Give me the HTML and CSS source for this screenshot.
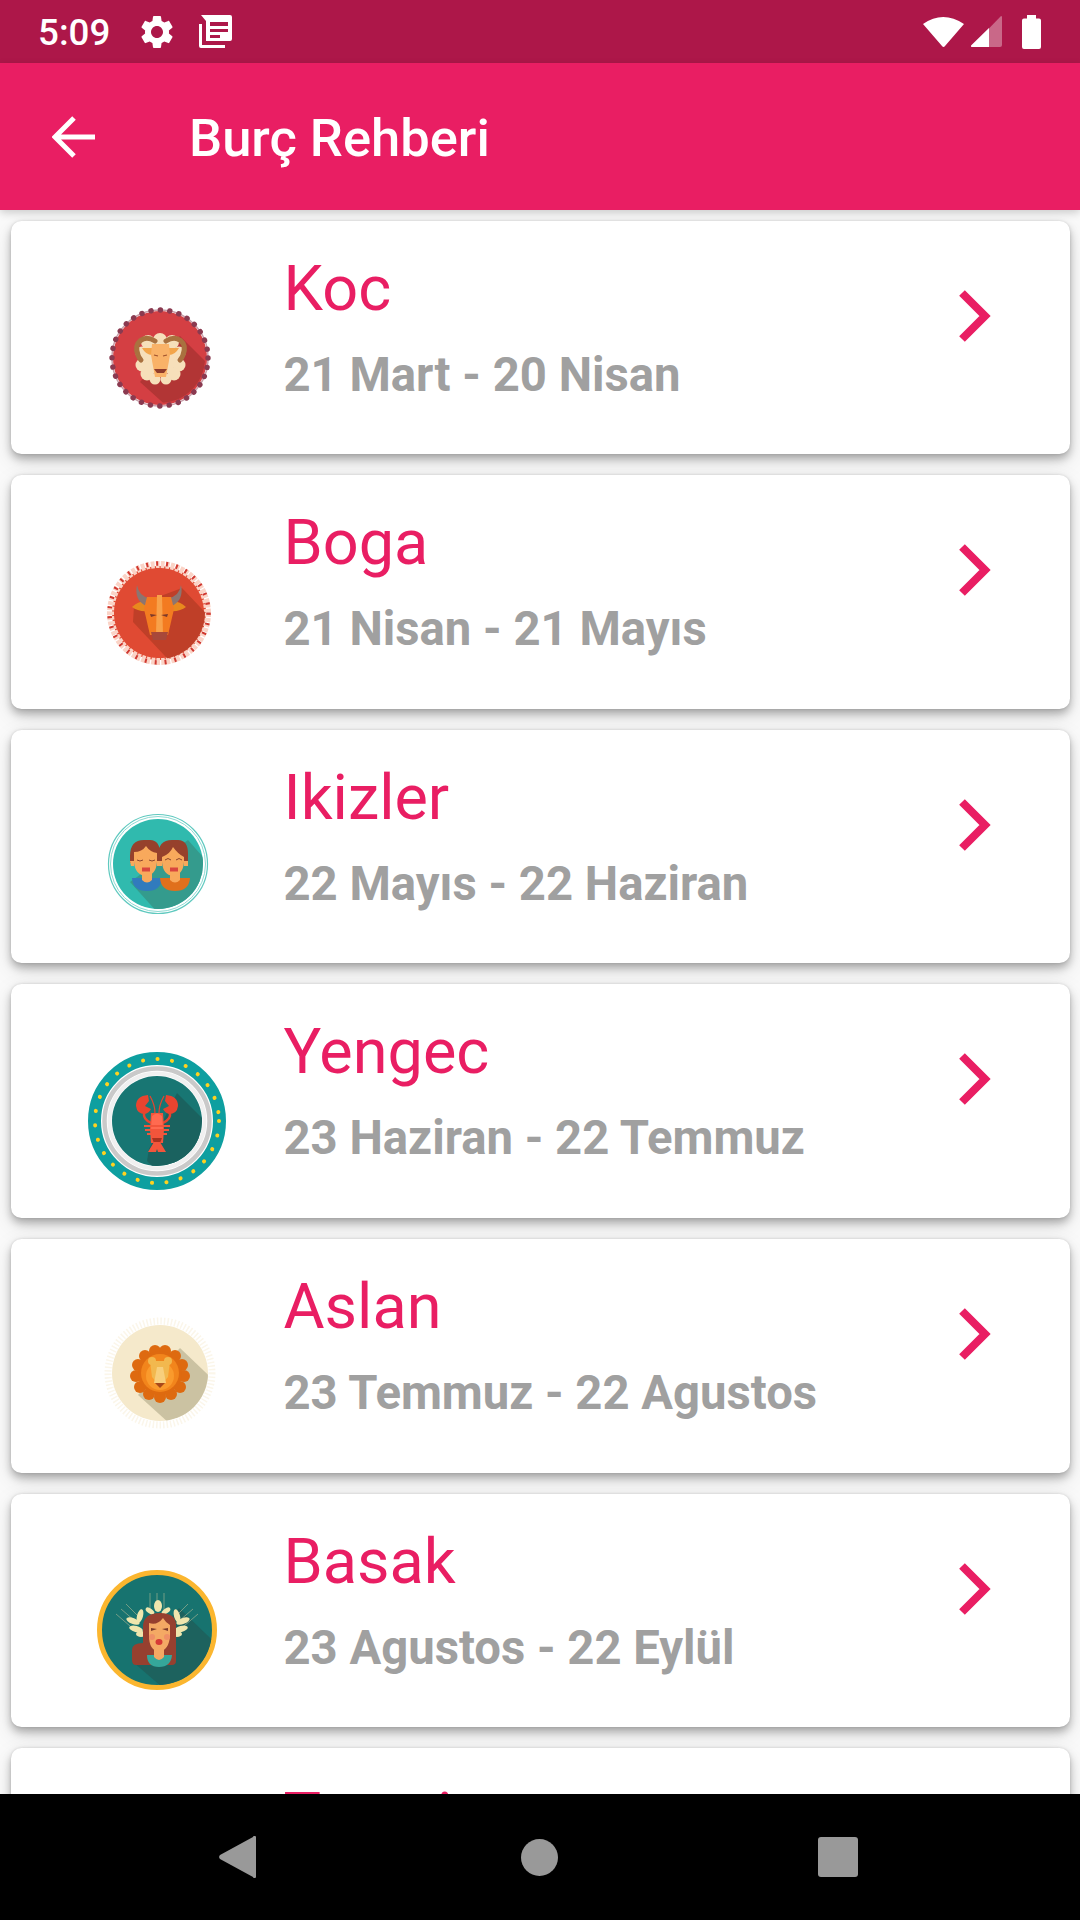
FILE: index.html
```html
<!DOCTYPE html>
<html lang="tr">
<head>
<meta charset="utf-8">
<title>Burç Rehberi</title>
<link rel="stylesheet" href="styles.css">
</head>
<body>
<div class="phone">
  <header class="status">
    <span class="clock">5:09</span>
    <svg class="st-gear" viewBox="2.4 1.8 19.2 20.4"><path fill="#fff" d="M19.14 12.94c.04-.3.06-.61.06-.94 0-.32-.02-.64-.07-.94l2.03-1.58c.18-.14.23-.41.12-.61l-1.92-3.32c-.12-.22-.37-.29-.59-.22l-2.39.96c-.5-.38-1.03-.7-1.62-.94l-.36-2.54c-.04-.24-.24-.41-.48-.41h-3.84c-.24 0-.43.17-.47.41l-.36 2.54c-.59.24-1.13.57-1.62.94l-2.39-.96c-.22-.08-.47 0-.59.22L2.74 8.87c-.12.21-.08.47.12.61l2.03 1.58c-.05.3-.09.63-.09.94s.02.64.07.94l-2.03 1.58c-.18.14-.23.41-.12.61l1.92 3.32c.12.22.37.29.59.22l2.39-.96c.5.38 1.03.7 1.62.94l.36 2.54c.05.24.24.41.48.41h3.84c.24 0 .44-.17.47-.41l.36-2.54c.59-.24 1.13-.56 1.62-.94l2.39.96c.22.08.47 0 .59-.22l1.92-3.32c.12-.22.07-.47-.12-.61l-2.01-1.58zM12 15.6c-1.98 0-3.6-1.62-3.6-3.6s1.62-3.6 3.6-3.6 3.6 1.62 3.6 3.6-1.62 3.6-3.6 3.6z"/></svg>
    <svg class="st-news" viewBox="0 0 33 33"><path fill="#fff" fill-rule="evenodd" d="M2 0H31a2 2 0 0 1 2 2V24a2 2 0 0 1-2 2H7V6ZM11 7V11H29V7ZM11 14V17H29V14H11ZM11 20V23H21V20Z"/><path fill="#fff" d="M0 9H3V30H26V33H2a2 2 0 0 1-2-2Z"/></svg>
    <span class="st-space"></span>
    <svg class="st-wifi" viewBox="0 0 41 31"><path fill="#fff" d="M0 8Q20-6 41 8L22 30Q20.500 32 19 30Z"/></svg>
    <svg class="st-signal" viewBox="0 0 31 31"><path fill="#fff" fill-opacity=".35" d="M30 0a1 1 0 0 1 1 1V29a2 2 0 0 1-2 2H0Z"/><path fill="#fff" d="M18 12V31H1a1 1 0 0 1-.7-1.700Z"/></svg>
    <svg class="st-batt" viewBox="0 0 19 34"><path fill="#fff" d="M5 0H14V3.500H17a2 2 0 0 1 2 2V32a2 2 0 0 1-2 2H2a2 2 0 0 1-2-2V5.500a2 2 0 0 1 2-2H5Z"/></svg>
  </header>
  <div class="appbar">
    <svg class="back" viewBox="0 0 43 42"><path fill="none" stroke="#fff" stroke-width="5" d="M43 21H4M22 2 3 21 22 40"/></svg>
    <h1 class="appbar-title">Burç Rehberi</h1>
  </div>
  <main class="list">
    <article class="card">
      <svg class="sign" viewBox="-80 -80 160 160"><defs><clipPath id="c1"><circle r="45"/></clipPath></defs>
        <circle r="47" fill="#d43f43"/>
        <circle r="48" fill="none" stroke="#c9a0ab" stroke-width="1.500"/>
        <circle r="48" fill="none" stroke="#8a3a50" stroke-width="5.400" stroke-linecap="round" stroke-dasharray="0.100 9.325"/>
        <polygon clip-path="url(#c1)" points="20,-22 62,20 20,60 -20,24" fill="#b23535"/>
        <g fill="#f6dfba"><circle cx="-12" cy="-16" r="7"/><circle cx="0" cy="-18" r="7"/><circle cx="12" cy="-16" r="7"/><circle cx="-18" cy="-5" r="6.500"/><circle cx="19" cy="-5" r="6.500"/><circle cx="-18" cy="7" r="6.500"/><circle cx="19" cy="7" r="6.500"/><circle cx="-13" cy="16" r="6.500"/><circle cx="14" cy="16" r="6.500"/><circle cx="-5" cy="21" r="5.500"/><circle cx="6" cy="21" r="5.500"/><circle r="17"/></g>
        <path fill="none" stroke="#a9713f" stroke-width="5" stroke-linecap="round" d="M-5-17C-16-24-27-16-22-3-21 0-20 1-19 2M6-17C17-24 28-16 23-3 22 0 21 1 20 2"/>
        <path fill="#f3a54a" d="M-18-10H-4L-8-3Q-14-3-18-10ZM19-10H5L9-3Q15-3 19-10Z"/>
        <path fill="#f9b268" d="M-8-14H9L10-3 6 19H-5L-9-3Z"/>
        <path fill="#8e3b2b" d="M-6 11H7L4 15H-3Z"/>
        <path stroke="#a0522d" stroke-width="1.200" d="M-6-3-2-2M7-3 3-2"/>
      </svg>
      <div class="text"><h2 class="name">Koc</h2><p class="dates">21 Mart - 20 Nisan</p></div>
      <svg class="chev" viewBox="0 0 32 52"><path d="M3 3 26 26 3 49" fill="none" stroke="#e91e63" stroke-width="8"/></svg>
    </article>
    <article class="card">
      <svg class="sign" viewBox="-80 -80 160 160"><defs><clipPath id="c2"><circle cx="-1" cy="1" r="46"/></clipPath></defs>
        <circle cx="-1" cy="1" r="47" fill="#e04a33"/>
        <circle cx="-1" cy="1" r="48.500" fill="none" stroke="#fbd3c6" stroke-width="7" stroke-dasharray="3.800 1.200"/>
        <circle cx="-1" cy="1" r="49.500" fill="none" stroke="#d0382f" stroke-width="4.500" stroke-dasharray="2 8"/>
        <polygon clip-path="url(#c2)" points="22,-24 62,18 20,60 -27,10 -26,-6" fill="#bf3f28"/>
        <path fill="#e8891e" d="M-28-5Q-20-12-12-10L-11-1Q-22 0-28-5ZM26-5Q18-12 10-10L9-1Q20 0 26-5Z"/>
        <path fill="#8c7570" d="M-23-27Q-21-15-10-14L-14-6Q-26-12-23-27ZM21-27Q19-15 8-14L12-6Q24-12 21-27Z"/>
        <path fill="#f37b21" d="M-13-15H11L14-3 8 23H-10L-16-3Z"/>
        <path fill="#f8a14a" d="M-3-17H2L3 23H-4Z"/>
        <path fill="#a8483a" d="M-9 20H8L6 28H-7Z"/>
        <path fill="#7c3a2a" d="M-10 2-3 3-9 5ZM8 2 1 3 7 5Z"/>
      </svg>
      <div class="text"><h2 class="name">Boga</h2><p class="dates">21 Nisan - 21 Mayıs</p></div>
      <svg class="chev" viewBox="0 0 32 52"><path d="M3 3 26 26 3 49" fill="none" stroke="#e91e63" stroke-width="8"/></svg>
    </article>
    <article class="card">
      <svg class="sign" viewBox="-80 -80 160 160"><defs><clipPath id="c3"><circle r="45"/></clipPath></defs>
        <g transform="translate(-2 -3)">
        <circle r="49.500" fill="#fff" stroke="#5fc9bf" stroke-width="1.200"/>
        <circle r="47.500" fill="none" stroke="#8ddad2" stroke-width="1"/>
        <circle r="45" fill="#30baae"/>
        <polygon clip-path="url(#c3)" points="30,-24 60,10 10,60 -28,18" fill="#349b8d"/>
        <path fill="#317bbd" d="M-26 14H4Q3 27-11 27T-26 14Z"/>
        <path fill="#e0701c" d="M2 14H32Q31 27 17 27T2 14Z"/>
        <path fill="#f8a95c" d="M-16 8H-6V16Q-11 21-16 16ZM12 8H22V16Q17 21 12 16Z"/>
        <path fill="#96412c" d="M-28-8Q-28-24-14-24H-8Q2-24 2-10V-1H-28ZM0-8Q0-24 14-24H20Q30-24 30-10V-1H0Z"/>
        <path fill="#f8a95c" d="M-24-12Q-16-12-12-18-8-12-1-11V-2Q-2 11-12 12-23 11-24-2ZM4-7Q12-10 15-17 20-10 26-7V-2Q25 11 15 12 5 11 4-2Z"/>
        <path fill="#f8a95c" d="M-28-3H-24V2H-27ZM-1-3H4V2H-1ZM26-3H30V2H26Z"/>
        <path fill="none" stroke="#7d3a2a" stroke-width=".9" d="M-21-4Q-18-2-15-4M-9-4Q-6-2-3-4M7-4Q10-7 13-4M18-4Q21-7 24-4"/>
        <path fill="#d9463e" d="M-16 3.500H-8V7.500H-16ZM12 3.500H20V7.500H12Z"/>
        </g>
      </svg>
      <div class="text"><h2 class="name">Ikizler</h2><p class="dates">22 Mayıs - 22 Haziran</p></div>
      <svg class="chev" viewBox="0 0 32 52"><path d="M3 3 26 26 3 49" fill="none" stroke="#e91e63" stroke-width="8"/></svg>
    </article>
    <article class="card">
      <svg class="sign" viewBox="-80 -80 160 160"><defs><clipPath id="c4"><circle r="45"/></clipPath></defs>
        <g transform="translate(-3 0)">
        <circle r="62.500" fill="none" stroke="#0e9fa0" stroke-width="13"/>
        <circle r="62" fill="none" stroke="#ffd21f" stroke-width="4" stroke-linecap="round" stroke-dasharray="0.100 14.510"/>
        <circle r="52.500" fill="none" stroke="#c9c9c9" stroke-width="4.500"/>
        <circle r="47.500" fill="none" stroke="#f0f0f0" stroke-width="4"/>
        <circle r="45" fill="#187673"/>
        <polygon clip-path="url(#c4)" points="20,-28 60,12 10,60 -10,40 -8,28" fill="#1a625f"/>
        <path fill="none" stroke="#e8442f" stroke-width="2.500" d="M-13-8Q-14-2-6 2M13-8Q14-2 6 2"/>
        <path fill="#e8442f" d="M-9-26Q-21-25-21-15-20-7-12-7-8-8-6-12L-12-15-8-20ZM9-26Q21-25 21-15 20-7 12-7 8-8 6-12L12-15 8-20Z"/>
        <path fill="#f2553b" d="M-6-8H6L7 8 6 22H-6L-7 8Z"/>
        <path fill="#ff6a50" d="M-5-5Q0-10 5-5L6 8H-6Z"/>
        <path fill="#f2553b" d="M-13 4H13V6H-13ZM-12 8H12V10H-12ZM-10 12H10V14H-10Z"/>
        <path fill="#a8321f" d="M-5 17H5L3 22H-3Z"/>
        <path fill="#f2553b" d="M-3 21H3L9 31H1L0 28-1 31H-9Z"/>
        <path fill="none" stroke="#e8442f" stroke-width="1.200" d="M-2-8Q-2-16-7-25M2-8Q2-16 7-25"/>
        </g>
      </svg>
      <div class="text"><h2 class="name">Yengec</h2><p class="dates">23 Haziran - 22 Temmuz</p></div>
      <svg class="chev" viewBox="0 0 32 52"><path d="M3 3 26 26 3 49" fill="none" stroke="#e91e63" stroke-width="8"/></svg>
    </article>
    <article class="card">
      <svg class="sign" viewBox="-80 -80 160 160"><defs><clipPath id="c5"><circle r="48"/></clipPath></defs>
        <g transform="translate(0 -3)">
        <circle r="52" fill="none" stroke="#fbf6ea" stroke-width="7" stroke-dasharray="1.500 2"/>
        <circle r="48" fill="#f5e9cb"/>
        <polygon clip-path="url(#c5)" points="20,-25 62,15 20,60 -22,22" fill="#cbc2a2"/>
        <g fill="#de6a10"><circle cx="-5" cy="-22" r="6"/><circle cx="5" cy="-22" r="6"/><circle cx="-15" cy="-17" r="6"/><circle cx="15" cy="-17" r="6"/><circle cx="-22" cy="-8" r="6"/><circle cx="22" cy="-8" r="6"/><circle cx="-24" cy="3" r="6"/><circle cx="24" cy="3" r="6"/><circle cx="-20" cy="14" r="6"/><circle cx="20" cy="14" r="6"/><circle cx="-11" cy="21" r="6"/><circle cx="11" cy="21" r="6"/><circle cy="24" r="6"/><circle r="22"/></g>
        <circle r="19" fill="#f2851c"/>
        <circle cy="3" r="14" fill="#fa9a2c"/>
        <g fill="#f2b84e"><circle cx="-8" cy="-12" r="4"/><circle cx="8" cy="-12" r="4"/><path d="M-10-12H10L8 4 0 13-8 4Z"/></g>
        <path fill="#f8cf7c" d="M-3-6H3L6 10H-6Z"/>
        <path fill="#a8481a" d="M-5 10H5L0 15Z"/>
        </g>
      </svg>
      <div class="text"><h2 class="name">Aslan</h2><p class="dates">23 Temmuz - 22 Agustos</p></div>
      <svg class="chev" viewBox="0 0 32 52"><path d="M3 3 26 26 3 49" fill="none" stroke="#e91e63" stroke-width="8"/></svg>
    </article>
    <article class="card">
      <svg class="sign" viewBox="-80 -80 160 160"><defs><clipPath id="c6"><circle r="55"/></clipPath></defs>
        <g transform="translate(-3 -1)">
        <circle r="57.500" fill="#17736f" stroke="#fbb62f" stroke-width="5"/>
        <polygon clip-path="url(#c6)" points="22,-22 70,24 20,70 -24,32" fill="#1d625e"/>
        <path fill="none" stroke="#8ba88c" stroke-width=".8" d="M-7-37V-20M0-37V-20M7-37V-20M-41-16-27-4M-36-21-22-9M-31-26-18-13M41-16 27-4M36-21 22-9M31-26 18-13"/>
        <g fill="#efe6ad">
          <ellipse cx="1" cy="-24" rx="4" ry="6"/><ellipse cx="-7" cy="-19" rx="5" ry="2.500" transform="rotate(35 -7 -19)"/><ellipse cx="9" cy="-19" rx="5" ry="2.500" transform="rotate(-35 9 -19)"/>
          <ellipse cx="-24" cy="-9" rx="7" ry="3" transform="rotate(20 -24 -9)"/><ellipse cx="-17" cy="-14" rx="3" ry="7" transform="rotate(15 -17 -14)"/><ellipse cx="-21" cy="-1" rx="7" ry="3" transform="rotate(15 -21 -1)"/><ellipse cx="-16" cy="4" rx="5" ry="3"/>
          <ellipse cx="26" cy="-9" rx="7" ry="3" transform="rotate(-20 26 -9)"/><ellipse cx="20" cy="-14" rx="3" ry="7" transform="rotate(-15 20 -14)"/><ellipse cx="24" cy="-1" rx="7" ry="3" transform="rotate(-15 24 -1)"/><ellipse cx="20" cy="4" rx="5" ry="3"/>
        </g>
        <path fill="#96402f" d="M-14-3Q-14-17 3-17T19-3V31Q19 35 15 35H-21Q-25 35-25 30V20Q-25 13-14 13Z"/>
        <path fill="#35a79a" d="M-10 25H15Q14 37 2 37T-10 25Z"/>
        <path fill="#f4a964" d="M-3 19H7V27Q2 33-3 27ZM-8-7Q0-4 6-12 9-7 13-5V6Q12 20 2 22-8 20-8 6Z"/>
        <path fill="#7d3a2a" d="M-6-2 0-1-6 1ZM11-2 5-1 11 1Z"/>
        <circle cx="-5" cy="7" r="3" fill="#ef8f66"/><circle cx="10" cy="7" r="3" fill="#ef8f66"/>
        <ellipse cx="2" cy="12" rx="3.500" ry="3" fill="#d63a36"/>
        </g>
      </svg>
      <div class="text"><h2 class="name">Basak</h2><p class="dates">23 Agustos - 22 Eylül</p></div>
      <svg class="chev" viewBox="0 0 32 52"><path d="M3 3 26 26 3 49" fill="none" stroke="#e91e63" stroke-width="8"/></svg>
    </article>
    <article class="card">
      <div class="sign"></div>
      <div class="text"><h2 class="name">Terazi</h2></div>
    </article>
  </main>
  <nav class="navbar">
    <svg class="nav-back" viewBox="0 0 37 42"><path fill="#999" d="M1 23a3 3 0 0 1 0-4L34 1a1.500 1.500 0 0 1 3 1V40a1.500 1.500 0 0 1-3 1Z"/></svg>
    <svg class="nav-home" viewBox="0 0 37 37"><circle cx="18.500" cy="18.500" r="18.500" fill="#999"/></svg>
    <svg class="nav-recent" viewBox="0 0 40 40"><rect width="40" height="40" rx="3" fill="#999"/></svg>
  </nav>
</div>
</body>
</html>
```
FILE: styles.css
```css
* { box-sizing: border-box; }
html, body { margin: 0; padding: 0; }
body { font-family: Roboto, "Noto Sans", sans-serif; background: #fafafa; }
.phone { width: 1080px; height: 1920px; display: flex; flex-direction: column; overflow: hidden; background: #fafafa; }

.status { flex: 0 0 63px; background: #ad1749; display: flex; align-items: center; padding: 0 39px 0 38px; color: #fff; }
.clock { font-size: 36.75px; font-weight: 500; width: 103px; padding-top: 2px; }
.st-gear { width: 32px; height: 34px; }
.st-news { width: 33px; height: 33px; margin-left: 26px; }
.st-space { flex: 1; }
.st-wifi { width: 41px; height: 31px; }
.st-signal { width: 31px; height: 31px; margin-left: 7px; }
.st-batt { width: 19px; height: 34px; margin-left: 20px; }

.appbar { flex: 0 0 147px; background: #e91e63; display: flex; align-items: center; padding-left: 52px; color: #fff; position: relative; z-index: 2; box-shadow: 0 3px 8px rgba(0,0,0,.18); }
.back { width: 43px; height: 42px; }
.appbar-title { margin: 3px 0 0 94px; font-size: 52.5px; font-weight: 500; line-height: 1; }

.list { flex: 1; min-height: 0; overflow: hidden; display: flex; flex-direction: column; gap: 21px; padding: 10.5px 10.5px 0; }
.card { flex: 0 0 233.65px; background: #fff; border-radius: 10.5px; box-shadow: 0 5px 8px rgba(0,0,0,.28), 0 8px 24px rgba(0,0,0,.1), 0 0 3px rgba(0,0,0,.12); display: flex; align-items: flex-start; }
.sign { flex: 0 0 160px; width: 160px; height: 160px; margin: 57px 0 0 69.5px; }
.text { margin-left: 43.5px; flex: 1; padding-top: 33px; }
.name { margin: 0; font-size: 63px; font-weight: 400; line-height: 70px; color: #e91e63; }
.dates { margin: 24px 0 0; font-size: 47.25px; font-weight: 700; line-height: 54px; color: #a0a0a0; }
.chev { flex: 0 0 32px; width: 32px; height: 52px; margin: 69px 79px 0 0; }

.navbar { flex: 0 0 126px; background: #000; display: flex; align-items: center; padding-left: 219px; position: relative; z-index: 2; }
.nav-back { width: 37px; height: 42px; }
.nav-home { width: 37px; height: 37px; margin-left: 265px; }
.nav-recent { width: 40px; height: 40px; margin-left: 260px; }
```
